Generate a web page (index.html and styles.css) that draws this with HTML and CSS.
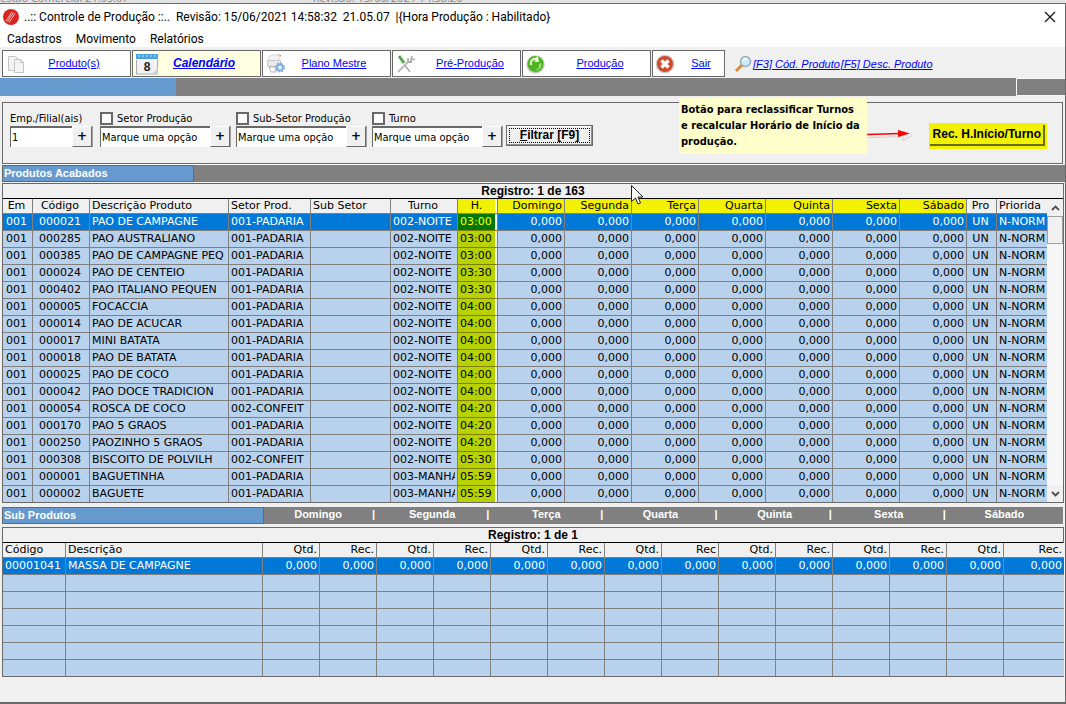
FILE: index.html
```
<!DOCTYPE html>
<html lang="pt-BR">
<head>
<meta charset="utf-8">
<title>Controle de Produção</title>
<link rel="stylesheet" href="styles.css">
</head>
<body>
<div class="backdrop"><span>estão Comercial 21.05.07</span><span>Revisão: 15/06/2021 14:58:26</span></div>
<main class="window">
  <header class="titlebar">
    <svg class="app-icon" width="16" height="16" viewBox="0 0 16 16"><circle cx="8" cy="8" r="8" fill="#d8251f"/><path d="M3 12 9 3M6 13.500 12 4.500M4.500 12.500 10.500 3.500" stroke="#fbd5d0" stroke-width=".9" fill="none"/></svg>
    <h1 class="title">..:: Controle de Produção ::..  Revisão: 15/06/2021 14:58:32  21.05.07  |{Hora Produção : Habilitado}</h1>
    <button class="close" aria-label="Fechar"><svg width="12" height="12" viewBox="0 0 12 12"><path d="M1 1 11 11M11 1 1 11" stroke="#111" stroke-width="1.200"/></svg></button>
  </header>
  <nav class="menu"><button>Cadastros</button><button>Movimento</button><button>Relatórios</button></nav>

  <nav class="toolbar">
    <a class="tool shifted" href="#"><svg width="24" height="24" viewBox="0 0 24 24"><g fill="#f4f4f4" stroke="#c4c4c4"><path d="M2.500 4.500h7l3 3v11h-10z"/><path d="M8.500 7.500h6l3 3v10h-9z"/><path d="M14.500 7.500v3h3" fill="none"/></g></svg><span>Produto(s)</span></a>
    <a class="tool shifted active" href="#"><svg width="24" height="24" viewBox="0 0 24 24"><path d="M0 3h22v19H0z" fill="#f1f3f5"/><path d="M.5 22V8M21.500 22V8M0 22h22" stroke="#a9adb3" fill="none"/><path d="M0 2h22v5H0z" fill="#4aa3df"/><path d="M2 4h18" stroke="#bfe2f7" stroke-dasharray="2 2"/><path d="M16 22l6-6v6z" fill="#c9cdd2"/><text class="cal-day" x="11" y="19" text-anchor="middle">8</text></svg><span>Calendário</span></a>
    <a class="tool shifted" href="#"><svg width="24" height="24" viewBox="0 0 24 24"><path d="M2 6q2-3 5-3h6v6H2z" fill="#f3f3f3" stroke="#d8d8d8"/><path d="M12 2l3 1v2z" fill="#e9896f"/><path d="M1.500 8.500h13v6h-13z" fill="#e8e8e8" stroke="#c8c8c8"/><path d="M3 15l2 5h5l-1-5z" fill="#fff" stroke="#b5b5b5"/><circle cx="14" cy="15.500" r="3" fill="#e5f1fc" stroke="#7db0e2" stroke-width="2"/><circle cx="14" cy="15.500" r="4.300" fill="none" stroke="#7db0e2" stroke-width="1.500" stroke-dasharray="1.700 1.700"/></svg><span>Plano Mestre</span></a>
    <a class="tool" href="#"><svg width="24" height="24" viewBox="0 0 24 24"><path d="M8 12 14 20" stroke="#a5a5a5" stroke-width="1.300"/><path d="M3 4 8 11" stroke="#4fa548" stroke-width="3"/><path d="M2 20 13 9" stroke="#bdbdbd" stroke-width="2"/><path d="M12 6v4h4M16 4l-1 4 4-1" stroke="#b0b0b0" stroke-width="1.800" fill="none"/></svg><span>Pré-Produção</span></a>
    <a class="tool" href="#"><svg width="24" height="24" viewBox="0 0 24 24"><circle cx="9.500" cy="12.500" r="9.300" fill="#c9ccc9"/><circle cx="9.500" cy="12" r="8" fill="#4cb51f"/><path d="M4 13q-1-7 6-7.500l2-1.500 1 6H8l2-2q-5 0-4 5z" fill="#eafbdc"/><path d="M15 11q1 7-6 7.500 5-2 4.500-6.500z" fill="#b9ee93"/></svg><span>Produção</span></a>
    <a class="tool exit" href="#"><svg width="24" height="24" viewBox="0 0 24 24"><circle cx="11" cy="12" r="9.300" fill="#c9c9c9"/><circle cx="11" cy="12" r="8" fill="#d24a2c"/><path d="M7.500 8.500l7 7M14.500 8.500l-7 7" stroke="#fff" stroke-width="3.500"/></svg><span>Sair</span></a>
    <div class="search-links">
      <svg width="17" height="18" viewBox="0 0 17 18"><path d="M1 16l6-6" stroke="#d98a35" stroke-width="3"/><circle cx="10.500" cy="6.500" r="5" fill="#c8e9fa" stroke="#9cacb8" stroke-width="1.500"/><path d="M8 6q1-3 4-2" stroke="#fff" stroke-width="1.500" fill="none"/></svg>
      <a href="#">[F3] Cód. Produto</a><a href="#">[F5] Desc. Produto</a>
    </div>
  </nav>

  <div class="band"><i class="band-blue"></i><i class="band-gray"></i><i class="band-end"></i></div>

  <form class="filters">
    <div class="field narrow"><label for="emp">Emp./Filial(ais)</label><div class="combo"><input id="emp" type="text" value="1"><button type="button">+</button></div></div>
    <div class="field"><label><input type="checkbox">Setor Produção</label><div class="combo"><input type="text" aria-label="Setor Produção" value="Marque uma opção"><button type="button">+</button></div></div>
    <div class="field"><label><input type="checkbox">Sub-Setor Produção</label><div class="combo"><input type="text" aria-label="Sub-Setor Produção" value="Marque uma opção"><button type="button">+</button></div></div>
    <div class="field"><label><input type="checkbox">Turno</label><div class="combo"><input type="text" aria-label="Turno" value="Marque uma opção"><button type="button">+</button></div></div>
    <button class="filter-btn" type="button"><span><u>F</u>iltrar [F9]</span></button>
    <button class="reclass-btn" type="button"><span>Rec. H.Início/Turno</span></button>
    <aside class="note"><p>Botão para reclassificar Turnos<br>e recalcular Horário de Início da<br>produção.</p>
      <svg width="46" height="16" viewBox="0 0 46 16"><path d="M2 11.500l34-1v4l9-5" stroke="#bbb" fill="none" opacity=".6"/><path d="M0 8.500 33 7.500" stroke="#f00" stroke-width="1.500"/><path d="M31 4l12 3.500L31 11z" fill="#f00"/></svg></aside>
  </form>

  <h2 class="section-bar"><span>Produtos Acabados</span></h2>

  <section class="grid">
    <h3 class="record">Registro: 1 de 163</h3>
    <svg class="cursor" width="12" height="20" viewBox="0 0 12 20"><path d="M.5.500v16l4-3.500 2.500 6 2.500-1-2.500-6h5z" fill="#fff" stroke="#222"/></svg>
    <div class="grid-body">
      <table id="produtos"></table>
      <div class="scroll"><button type="button" aria-label="Acima"><svg width="9" height="6" viewBox="0 0 9 6"><path d="M1 5 4.500 1.500 8 5" fill="none" stroke="#505050" stroke-width="1.800"/></svg></button><i class="thumb"></i><button class="down" type="button" aria-label="Abaixo"><svg width="9" height="6" viewBox="0 0 9 6"><path d="M1 1 4.500 4.500 8 1" fill="none" stroke="#505050" stroke-width="1.800"/></svg></button></div>
    </div>
  </section>

  <div class="sub-bar"><h2>Sub Produtos</h2><ul class="days"><li><span>Domingo</span>|</li><li><span>Segunda</span>|</li><li><span>Terça</span>|</li><li><span>Quarta</span>|</li><li><span>Quinta</span>|</li><li><span>Sexta</span>|</li><li><span>Sábado</span></li></ul></div>

  <section class="grid">
    <h3 class="record">Registro: 1 de 1</h3>
    <table id="subprodutos"></table>
  </section>
</main>
<script src="app.js"></script>
</body>
</html>
```
FILE: styles.css
```
* { box-sizing: border-box; }
body {
  margin: 0;
  min-height: 100vh;
  display: flex;
  flex-direction: column;
  background: #f0f0f0;
  color: #000;
  font: 11px/14px "DejaVu Sans Condensed", "DejaVu Sans", sans-serif;
}
h1, h2, h3, p, ul { margin: 0; padding: 0; font: inherit; }
button, input { font: inherit; color: inherit; }
a { color: #00f; }
svg { display: block; flex: none; }

.backdrop {
  display: flex;
  align-items: flex-end;
  gap: 184px;
  height: 3px;
  overflow: hidden;
  background: #e3e3e3;
  color: #888;
  font: 11px/10px "Open Sans", sans-serif;
}
.window {
  flex: 1;
  border: solid #696969;
  border-width: 1px 1px 2px 0;
}

.titlebar {
  display: flex;
  align-items: center;
  gap: 5px;
  height: 25px;
  padding: 0 9px 0 3px;
  background: #fff;
}
.title { flex: 1; white-space: pre; font: 12px/16px Roboto, sans-serif; }
.close { padding: 0; border: 0; background: none; }
.menu { display: flex; gap: 14px; height: 18px; padding: 0 7px; background: #fff; }
.menu button { padding: 0; border: 0; background: none; font: 12px/20px Roboto, sans-serif; }

.toolbar {
  display: flex;
  gap: 1px;
  padding: 3px 2px 1px;
  font: 11px/14px "Liberation Sans", sans-serif;
}
.tool {
  display: flex;
  align-items: center;
  width: 129px;
  height: 27px;
  padding-left: 3px;
  border: 1px solid #696969;
  background: #fff;
}
.tool span { flex: 1; padding-bottom: 2px; text-align: center; }
.tool.shifted { padding-right: 12px; }
.tool.exit { width: 73px; padding-left: 1px; }
.tool.active { background: #ffffe1; font-size: 12px; font-weight: bold; font-style: italic; }
.cal-day { font: bold 12px "Liberation Sans", sans-serif; fill: #222; }
.search-links { display: flex; align-items: center; gap: 1px; padding-left: 9px; font-style: italic; }

.band { display: flex; height: 18px; }
.band-blue { width: 176px; background: #6699ce; }
.band-gray { flex: 1; background: #808080; }
.band-end { width: 49px; border: solid #f8f8f8; border-width: 1px 0 1px 1px; background: #808080; }

.filters {
  position: relative;
  display: flex;
  align-items: flex-start;
  gap: 6px;
  height: 62px;
  margin: 6px 2px 1px 2px;
  padding: 8px 15px 0 7px;
  border: 1px solid #696969;
  box-shadow: 0 1px #fff;
}
.field { width: 130px; }
.field.narrow { width: 82px; margin-right: 2px; }
.field label { display: flex; align-items: center; gap: 4px; height: 15px; }
.field input[type="checkbox"] {
  appearance: none;
  width: 13px;
  height: 13px;
  margin: 0;
  border: 2px solid #696969;
  background: #fff;
}
.combo { display: flex; height: 21px; }
.combo input {
  flex: 1;
  min-width: 0;
  padding: 0 1px;
  border: solid #696969;
  border-width: 2px 0 0 1px;
  background: #fff;
}
.combo button {
  width: 20px;
  padding: 0 0 2px;
  border: 1px solid;
  border-color: #fff #696969 #696969 #fff;
  background: #f0f0f0;
  box-shadow: 1px 0 #a0a0a0;
  font: bold 12px/14px "DejaVu Sans", sans-serif;
}
.filter-btn {
  width: 87px;
  height: 21px;
  margin: 14px 0 0 -2px;
  padding: 2px;
  border: 1px solid #696969;
  background: #f0f0f0;
  box-shadow: inset -1px -1px #909090, inset 1px 1px #fff;
  font: bold 12px/13px "Liberation Sans", sans-serif;
}
.filter-btn span { display: block; border: 1px dotted #000; }
.reclass-btn {
  margin: 12px 0 0 auto;
  padding: 2px 2px 3px 1px;
  border: 0;
  background: #f2f200;
  font: bold 12px/18px "Liberation Sans", sans-serif;
}
.reclass-btn span {
  display: block;
  padding: 0 2px 1px 3px;
  border: solid #6c6c00;
  border-width: 0 2px 2px 0;
}
.note {
  position: absolute;
  top: -5px;
  left: 676px;
  display: flex;
  align-items: flex-end;
}
.note p {
  width: 188px;
  height: 56px;
  padding: 4px 2px;
  background: #ffffcc;
  font: bold 11px/16px "DejaVu Sans Condensed", sans-serif;
  white-space: nowrap;
}
.note svg { margin-bottom: 12px; }

.section-bar {
  height: 17px;
  margin: 0 0 1px 2px;
  background: #808080;
  color: #fff;
  font: bold 11px/15px "Liberation Sans", sans-serif;
}
.section-bar span { display: block; width: 192px; padding-left: 1px; border: 1px solid #696969; background: #6699ce; }

.grid { position: relative; margin: 0 1px 0 2px; border: 1px solid #696969; }
.record { height: 15px; border-bottom: 1px solid #000; font: bold 12px/14px "Liberation Sans", sans-serif; text-align: center; }
.cursor { position: absolute; top: 1px; left: 628px; z-index: 1; }
.grid-body { display: flex; }
.grid table {
  flex: 1;
  width: 100%;
  table-layout: fixed;
  border-collapse: separate;
  border-spacing: 0;
  font: 11px/14px "DejaVu Sans", sans-serif;
}
.grid th, .grid td { padding: 0 2px; border: solid #808080; border-width: 0 1px 1px 0; text-align: left; }
.grid th:last-child, .grid td:last-child { border-right: 0; }
.grid tr:last-child td { border-bottom: 0; }
.grid th { height: 15px; font-weight: normal; background: #f0f0f0; }
.grid td { height: 17px; background: #b8d2ee; }
.grid tr:last-child td { height: 16px; }
.grid tr.selected td { background: #0078d7; color: #fff; }
.grid span { display: block; height: 14px; overflow: hidden; white-space: nowrap; }
.grid .center { padding: 0 3px 0 1px; text-align: center; }
.grid .right { text-align: right; }
.grid th.marked { background: #f2f200; }
.grid td.hour { padding: 0 0 0 2px; background: #b8d200; border-right-color: #808080; border-bottom-color: #808000; }
.grid .hour { box-shadow: inset -2px 0 #f0f0f0; }
.grid tr.selected td.hour { background: #007800; color: #ff0; }

.scroll {
  display: flex;
  flex-direction: column;
  width: 16px;
  background: #f7f7f7;
}
.scroll button { display: grid; place-items: center; height: 17px; padding: 0; border: 0; background: #f0f0f0; }
.scroll .down { margin-top: auto; }
.thumb { height: 28px; border: 1px solid #a0a0a0; background: #f0f0f0; }

.sub-bar {
  display: flex;
  height: 17px;
  margin: 4px 2px 3px;
  background: #808080;
  color: #fff;
  font: bold 11px/15px "Liberation Sans", sans-serif;
}
.sub-bar h2 { width: 262px; padding-left: 1px; border: 1px solid #696969; background: #6699ce; }
.days { display: flex; flex: 1; list-style: none; }
.days li { display: flex; flex: 1; padding-right: 3px; }
.days span { flex: 1; text-align: center; }
```
FILE: app.js
```
function buildTable(id, columns, rows) {
  const table = document.getElementById(id);
  const group = document.createElement("colgroup");
  columns.forEach(([, width]) => {
    const col = document.createElement("col");
    col.style.width = width + "px";
    group.append(col);
  });
  table.append(group);
  const addRow = (section, tag, values, extra) => {
    const tr = section.insertRow();
    values.forEach((value, i) => {
      const cell = document.createElement(tag);
      const span = document.createElement("span");
      span.textContent = value;
      cell.className = [columns[i][2], extra ? columns[i][3] : ""].join(" ").trim();
      cell.append(span);
      tr.append(cell);
    });
    return tr;
  };
  addRow(table.createTHead(), "th", columns.map(c => c[0]), true);
  const body = table.createTBody();
  rows.forEach((row, i) => {
    const tr = addRow(body, "td", row, false);
    if (i === 0) tr.className = "selected";
  });
}

const days = ["Domingo", "Segunda", "Terça", "Quarta", "Quinta", "Sexta", "Sábado"];
const zeros = n => Array(n).fill("0,000");

const products = [
  ["000021", "PAO DE CAMPAGNE", "03:00"],
  ["000285", "PAO AUSTRALIANO", "03:00"],
  ["000385", "PAO DE CAMPAGNE PEQ", "03:00"],
  ["000024", "PAO DE CENTEIO", "03:30"],
  ["000402", "PAO ITALIANO PEQUEN", "03:30"],
  ["000005", "FOCACCIA", "04:00"],
  ["000014", "PAO DE ACUCAR", "04:00"],
  ["000017", "MINI BATATA", "04:00"],
  ["000018", "PAO DE BATATA", "04:00"],
  ["000025", "PAO DE COCO", "04:00"],
  ["000042", "PAO DOCE TRADICION", "04:00"],
  ["000054", "ROSCA DE COCO", "04:20", "002-CONFEIT"],
  ["000170", "PAO 5 GRAOS", "04:20"],
  ["000250", "PAOZINHO 5 GRAOS", "04:20"],
  ["000308", "BISCOITO DE POLVILH", "05:30", "002-CONFEIT"],
  ["000001", "BAGUETINHA", "05:59", "001-PADARIA", "003-MANHA"],
  ["000002", "BAGUETE", "05:59", "001-PADARIA", "003-MANHA"]
];

buildTable("produtos", [
  ["Em", 30, "center"], ["Código", 57, "center"], ["Descrição Produto", 139, ""],
  ["Setor Prod.", 82, ""], ["Sub Setor", 80, ""], ["Turno", 67, "", "center"],
  ["H.", 40, "hour", "marked center"],
  ...days.map(d => [d, 67, "right", "marked"]),
  ["Pro", 30, "center"], ["Priorida", 50, ""]
], products.map(([code, name, hour, sector = "001-PADARIA", shift = "002-NOITE"]) =>
  ["001", code, name, sector, "", shift, hour, ...zeros(7), "UN", "N-NORM"]));

buildTable("subprodutos", [
  ["Código", 63, ""], ["Descrição", 197, ""],
  ...days.flatMap((d, i) => [["Qtd.", 57, "right"], [i === 3 ? "Rec" : "Rec.", i === 6 ? 60 : 57, "right"]])
], [["00001041", "MASSA DE CAMPAGNE", ...zeros(14)], ...Array.from({ length: 6 }, () => Array(16).fill(""))]);
```
